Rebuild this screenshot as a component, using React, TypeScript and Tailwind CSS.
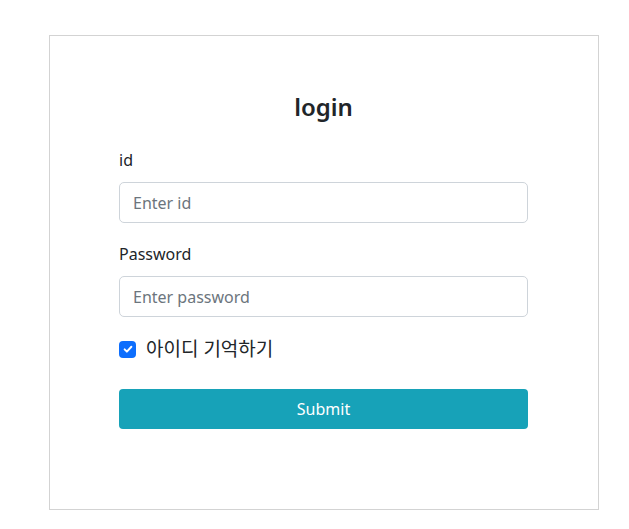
import { useState } from 'react';

export default function App() {
  const [remember, setRemember] = useState(true);

  return (
    <div
      className="min-h-screen bg-white pl-[49px] pt-[35px] text-[#212529]"
      style={{ fontFamily: '"Noto Sans", "Noto Sans CJK KR", sans-serif' }}
    >
      <div className="w-[550px] h-[475px] border border-[#d3d3d3] pl-[69px] pr-[70px] pt-[56px]">
        <h2 className="text-center text-[24px] leading-[29px] font-semibold">login</h2>

        <form className="mt-[27px]" onSubmit={(e) => e.preventDefault()}>
          <label className="block text-[16px] leading-[24px] mb-[10px]">id</label>
          <input
            type="text"
            placeholder="Enter id"
            className="block w-full h-[41px] px-[13px] text-[16px] border border-[#ced4da] rounded-[5px] placeholder:text-[#6c757d] outline-none"
          />

          <label className="block text-[16px] leading-[24px] mt-[19px] mb-[10px]">Password</label>
          <input
            type="password"
            placeholder="Enter password"
            className="block w-full h-[41px] px-[13px] text-[16px] border border-[#ced4da] rounded-[5px] placeholder:text-[#6c757d] outline-none"
          />

          <div className="flex items-center mt-[20px] h-[24px]">
            <button
              type="button"
              onClick={() => setRemember(!remember)}
              className={`w-[17px] h-[17px] rounded-[4px] flex items-center justify-center ${
                remember ? 'bg-[#0d6efd]' : 'border border-[#ced4da] bg-white'
              }`}
            >
              {remember && (
                <svg viewBox="0 0 16 16" className="w-[12px] h-[12px]" fill="none">
                  <path d="M3.5 8.5l3 3 6-6.5" stroke="white" strokeWidth="2.6" strokeLinecap="round" strokeLinejoin="round" />
                </svg>
              )}
            </button>
            <span className="ml-[10px] text-[19px] leading-[24px]">아이디 기억하기</span>
          </div>

          <button
            type="submit"
            className="mt-[28px] w-full h-[40px] rounded-[4px] bg-[#17a2b8] text-white text-[16px]"
          >
            Submit
          </button>
        </form>
      </div>
    </div>
  );
}
